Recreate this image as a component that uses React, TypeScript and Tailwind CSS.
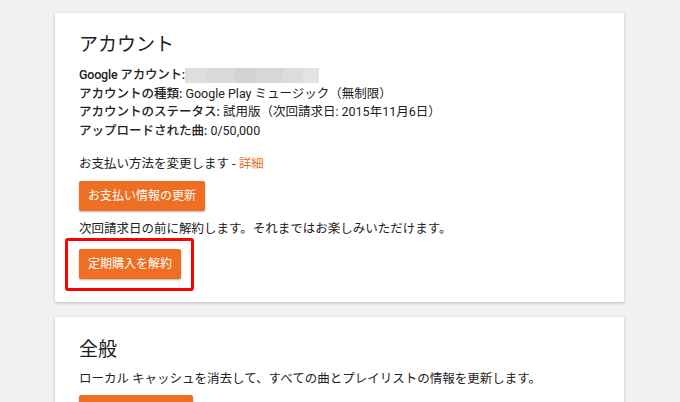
const font = "font-['Roboto','Noto_Sans_CJK_JP',sans-serif]";

function OrangeButton({ label }: { label: string }) {
  return (
    <button className="h-[30px] px-[9px] rounded-[2px] bg-[#ee6f22] text-white text-[12px] leading-[30px] shadow-[0_1px_2px_rgba(0,0,0,0.3)]">
      {label}
    </button>
  );
}

function App() {
  return (
    <div className={`${font} min-h-[402px] h-[402px] overflow-hidden bg-[#f1f1f1] pl-[55px] pt-[13px] text-[#222]`}>
      {/* アカウント */}
      <div className="w-[569px] bg-white shadow-[0_1px_3px_rgba(0,0,0,0.22)] pt-5 px-6 pb-[23px]">
        <h2 className="text-[19px] leading-[24px] text-[#212121]">アカウント</h2>
        <div className="mt-[9px] text-[12.5px] leading-[18.5px]">
          <div className="flex items-center">
            <span className="font-medium tracking-[-0.2px]">Google アカウント:</span>
            <span className="inline-flex h-[15px] w-[134px]">
              <span className="w-[22px] bg-[#dedede]" />
              <span className="w-[28px] bg-[#d9d9d9]" />
              <span className="w-[22px] bg-[#d3d3d3]" />
              <span className="w-[26px] bg-[#d7d7d7]" />
              <span className="w-[20px] bg-[#dcdcdc]" />
              <span className="w-[16px] bg-[#e3e3e3]" />
            </span>
          </div>
          <div>
            <span className="font-medium">アカウントの種類:</span> Google Play ミュージック（無制限）
          </div>
          <div>
            <span className="font-medium">アカウントのステータス:</span> 試用版（次回請求日: 2015年11月6日）
          </div>
          <div>
            <span className="font-medium">アップロードされた曲:</span> 0/50,000
          </div>
        </div>
        <p className="mt-[15px] text-[12.5px] leading-[18.5px]">
          お支払い方法を変更します - <span className="text-[#ee6f22]">詳細</span>
        </p>
        <div className="mt-[7px]">
          <OrangeButton label="お支払い情報の更新" />
        </div>
        <p className="mt-[9px] text-[12.5px] leading-[18.5px]">次回請求日の前に解約します。それまではお楽しみいただけます。</p>
        <div className="relative mt-[11px] w-fit">
          <OrangeButton label="定期購入を解約" />
          <div className="absolute -left-[14px] -top-[11px] w-[129px] h-[53px] border-[3px] border-[#ff0000] rounded-[3px]" />
        </div>
      </div>

      {/* 全般 */}
      <div className="mt-[15px] w-[569px] bg-white shadow-[0_1px_3px_rgba(0,0,0,0.22)] pt-[21px] px-6 pb-6">
        <h2 className="text-[19px] leading-[24px] text-[#212121]">全般</h2>
        <p className="mt-[8px] text-[12.5px] leading-[18.5px]">ローカル キャッシュを消去して、すべての曲とプレイリストの情報を更新します。</p>
        <div className="mt-[6px]">
          <OrangeButton label="キャッシュを更新" />
        </div>
      </div>
    </div>
  );
}

export default App;
